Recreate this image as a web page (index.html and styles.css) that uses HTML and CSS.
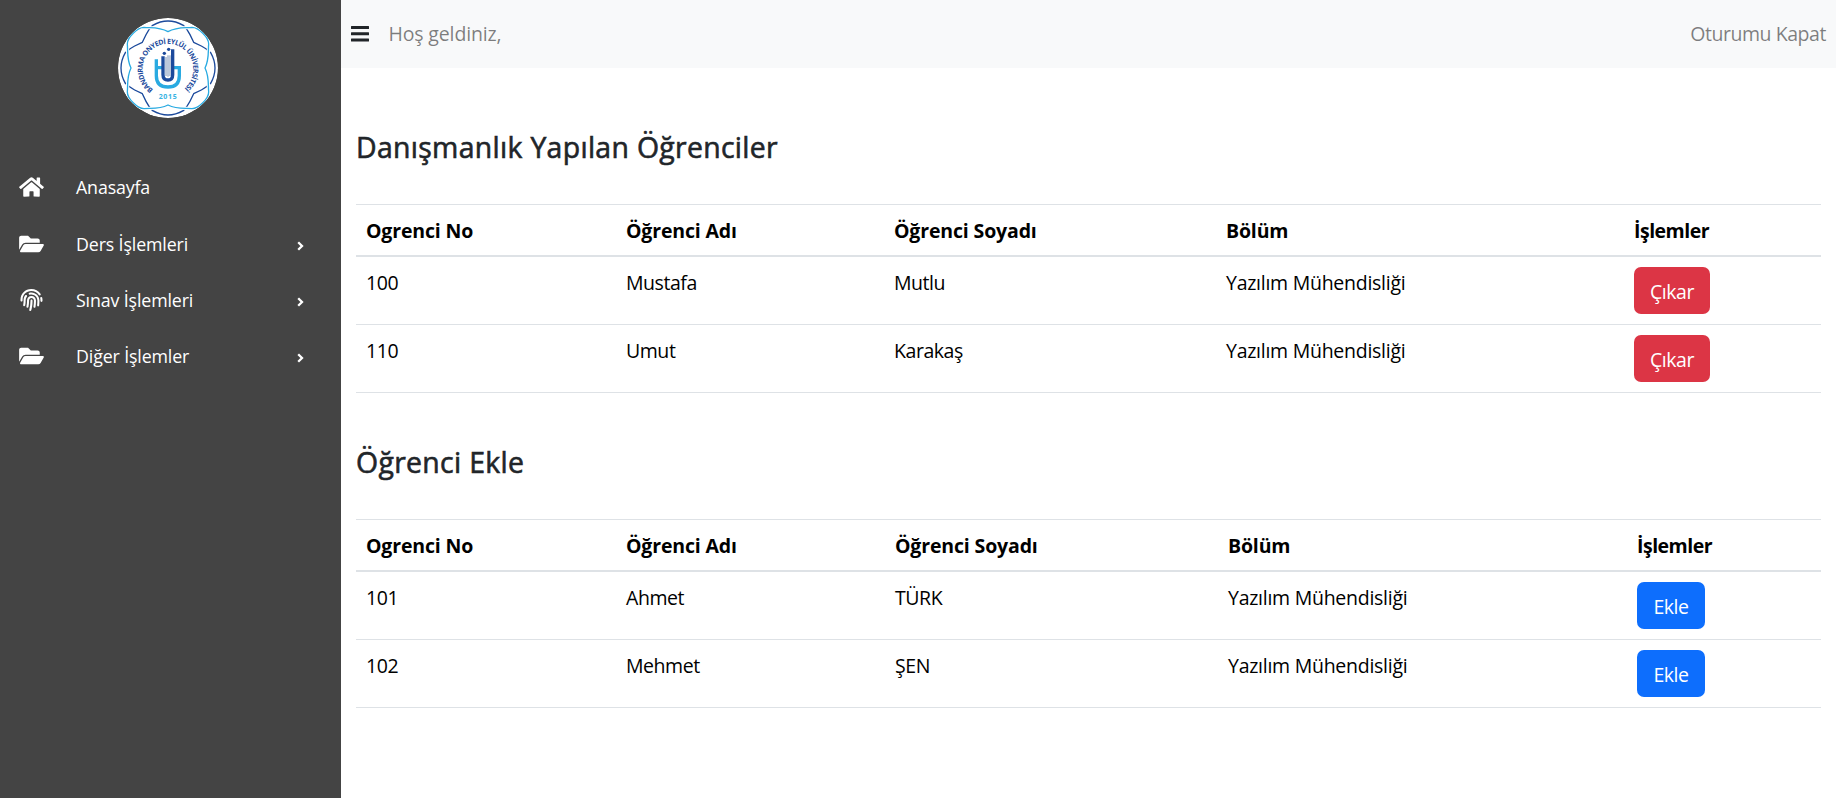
FILE: index.html
```html
<!DOCTYPE html>
<html lang="tr">
<head>
<meta charset="utf-8">
<title>Danışmanlık</title>
<link rel="stylesheet" href="styles.css">
</head>
<body>
<svg class="defs" aria-hidden="true">
  <symbol id="folder" viewBox="0 0 576 512"><path d="M572.694 292.093L500.27 416.248A63.997 63.997 0 0 1 444.989 448H45.025c-18.523 0-30.064-20.093-20.731-36.093l72.424-124.155A64 64 0 0 1 152 256h399.964c18.523 0 30.064 20.093 20.73 36.093zM152 224h328v-48c0-26.51-21.49-48-48-48H272l-64-64H48C21.49 64 0 85.49 0 112v278.046l69.077-118.418C86.214 242.25 117.989 224 152 224z"/></symbol>
  <symbol id="chevron" viewBox="0 0 7 10"><path d="M1.2 1.2L5 5 1.2 8.8" fill="none" stroke="currentColor" stroke-width="2.3"/></symbol>
</svg>
<div class="layout">
  <aside class="sidebar">
    <svg class="logo" viewBox="0 0 300 300">
      <circle cx="150" cy="150" r="150" fill="#fff"/>
      <g fill="none" stroke-width="4" stroke-linejoin="round">
        <path stroke="#1c4a9c" d="M73 73L84 50Q92 34 104 22Q150-4 196 22Q208 34 216 50L227 73L250 84Q266 92 278 104Q304 150 278 196Q266 208 250 216L227 227L216 250Q208 266 196 278Q150 304 104 278Q92 266 84 250L73 227L50 216Q34 208 22 196Q-4 150 22 104Q34 92 50 84Z"/>
        <path stroke="#fff" stroke-width="10" d="M150 41C124 26 100 30 78 28C58 28 28 58 28 78C30 100 26 124 39 150C26 176 30 200 28 222C28 242 58 272 78 272C100 270 124 274 150 261C176 274 200 270 222 272C242 272 272 242 272 222C270 200 274 176 261 150C274 124 270 100 272 78C272 58 242 28 222 28C200 30 176 26 150 41Z"/>
        <path stroke="#29aae1" d="M150 41C124 26 100 30 78 28C58 28 28 58 28 78C30 100 26 124 39 150C26 176 30 200 28 222C28 242 58 272 78 272C100 270 124 274 150 261C176 274 200 270 222 272C242 272 272 242 272 222C270 200 274 176 261 150C274 124 270 100 272 78C272 58 242 28 222 28C200 30 176 26 150 41Z"/>
      </g>
      <path id="ring" d="M105.500 215A76 76 0 1 1 194.500 215" fill="none"/>
      <text class="logo-name" textLength="376"><textPath href="#ring" textLength="376">BANDIRMA ONYEDİ EYLÜL ÜNİVERSİTESİ</textPath></text>
      <g fill="none">
        <path stroke="#29aae1" stroke-width="10" d="M115 124V173Q115 207 150 207Q184 207 184 173V149H168M115 149H132"/>
        <path stroke="#1c4a9c" stroke-width="10" d="M135 115V170Q135 186 150 186Q164 186 164 170V94"/>
        <path stroke="#7890b5" stroke-width="3" d="M144 117V174M150 112V176M156 112V174"/>
      </g>
      <circle cx="139" cy="106" r="5" fill="#1c4a9c"/>
      <circle cx="152" cy="94" r="5" fill="#1c4a9c"/>
      <text class="logo-year" x="122" y="242" textLength="54">2015</text>
    </svg>
    <nav class="menu">
      <a class="item item-home"><svg class="icon" viewBox="0 0 576 512"><path d="M280.37 148.26L96 300.11V464a16 16 0 0 0 16 16l112.06-.29a16 16 0 0 0 15.92-16V368a16 16 0 0 1 16-16h64a16 16 0 0 1 16 16v95.64a16 16 0 0 0 16 16.05L464 480a16 16 0 0 0 16-16V300L295.67 148.26a12.19 12.19 0 0 0-15.3 0zM571.6 251.47L488 182.56V44.05a12 12 0 0 0-12-12h-56a12 12 0 0 0-12 12v72.61L318.47 43a48 48 0 0 0-61 0L4.34 251.47a12 12 0 0 0-1.6 16.9l25.5 31A12 12 0 0 0 45.15 301l235.22-193.74a12.19 12.19 0 0 1 15.3 0L530.9 301a12 12 0 0 0 16.9-1.6l25.5-31a12 12 0 0 0-1.7-16.93z"/></svg><span class="label">Anasayfa</span></a>
      <a class="item"><svg class="icon"><use href="#folder"/></svg><span class="label">Ders İşlemleri</span><svg class="chevron"><use href="#chevron"/></svg></a>
      <a class="item"><svg class="icon" viewBox="0 0 512 512"><path d="M256.12 245.96c-13.25 0-24 10.74-24 24 1.14 72.25-8.14 141.9-27.7 211.55-2.73 9.72 2.15 30.49 23.12 30.49 10.48 0 20.11-6.92 23.09-17.52 13.53-47.91 31.04-125.41 29.48-224.52.01-13.25-10.73-24-23.99-24zm-.86-81.73C194 164.16 151.25 211.3 152.1 265.32c.75 47.94-3.75 95.91-13.37 142.55-2.69 12.98 5.67 25.69 18.64 28.36 13.05 2.67 25.67-5.66 28.36-18.64 10.34-50.09 15.17-101.58 14.37-153.02-.41-25.95 19.92-52.49 54.45-52.34 31.31.47 57.15 25.34 57.62 55.47.77 48.05-2.81 96.33-10.61 143.55-2.17 13.06 6.69 25.42 19.76 27.58 19.97 3.33 26.81-15.1 27.58-19.77 8.28-50.03 12.06-101.21 11.27-152.11-.88-55.8-47.94-101.88-104.91-102.72zm-110.69-19.78c-10.3-8.34-25.37-6.8-33.76 3.48-25.62 31.5-39.39 71.28-38.75 112 .59 37.58-2.47 75.27-9.11 112.05-2.34 13.05 6.31 25.53 19.36 27.89 20.11 3.5 27.07-14.81 27.89-19.36 7.19-39.84 10.5-80.66 9.86-121.33-.47-29.88 9.2-57.88 28-80.97 8.35-10.28 6.79-25.39-3.49-33.76zm109.47-62.33c-15.41-.41-30.87 1.44-45.78 4.97-12.89 3.06-20.87 15.98-17.83 28.89 3.06 12.89 16 20.83 28.89 17.83 11.05-2.61 22.47-3.77 34-3.69 75.43 1.13 137.73 61.5 138.88 134.58.59 37.88-1.28 76.11-5.58 113.63-1.5 13.17 7.95 25.08 21.11 26.58 16.72 1.95 25.51-11.88 26.58-21.11a929.06 929.06 0 0 0 5.89-119.85c-1.56-98.75-85.07-180.33-186.16-181.83zm252.07 121.45c-2.86-12.92-15.51-21.2-28.61-18.27-12.94 2.86-21.12 15.66-18.26 28.61 4.71 21.41 4.91 37.41 4.7 61.6-.11 13.27 10.55 24.09 23.8 24.2h.2c13.17 0 23.89-10.61 24-23.8.18-22.18.4-44.11-5.83-72.34zm-40.12-90.72C417.29 43.46 337.6 1.29 252.81.02 183.02-.82 118.47 24.91 70.46 72.94 24.09 119.37-.9 181.04.14 246.65l-.12 21.47c-.39 13.25 10.03 24.31 23.28 24.69.23.02.48.02.72.02 12.92 0 23.59-10.3 23.97-23.3l.16-23.64c-.83-52.5 19.16-101.86 56.28-139 38.76-38.8 91.34-59.67 147.68-58.86 69.45 1.03 134.73 35.56 174.62 92.39 7.61 10.86 22.56 13.45 33.42 5.86 10.84-7.62 13.46-22.59 5.84-33.43z"/></svg><span class="label">Sınav İşlemleri</span><svg class="chevron"><use href="#chevron"/></svg></a>
      <a class="item"><svg class="icon"><use href="#folder"/></svg><span class="label">Diğer İşlemler</span><svg class="chevron"><use href="#chevron"/></svg></a>
    </nav>
  </aside>
  <div class="page">
    <header class="navbar">
      <svg class="bars" viewBox="0 0 18 16"><path d="M.5 0h17q.5 0 .5.5v2q0 .5-.5.5H.5Q0 3 0 2.500v-2Q0 0 .5 0zm0 6.300h17q.5 0 .5.5v2q0 .5-.5.5H.5Q0 9.300 0 8.800v-2Q0 6.300.5 6.300zm0 6.200h17q.5 0 .5.5v2q0 .5-.5.5H.5Q0 15.500 0 15v-2Q0 12.500.5 12.500z"/></svg>
      <span class="welcome">Hoş geldiniz,</span>
      <a class="logout">Oturumu Kapat</a>
    </header>
    <main class="content">
      <h3 class="title">Danışmanlık Yapılan Öğrenciler</h3>
      <table class="table">
        <colgroup><col class="c-no"><col class="c-name"><col class="c-surname"><col class="c-dept"><col></colgroup>
        <thead><tr><th>Ogrenci No</th><th>Öğrenci Adı</th><th>Öğrenci Soyadı</th><th>Bölüm</th><th class="ops">İşlemler</th></tr></thead>
        <tbody>
          <tr><td>100</td><td>Mustafa</td><td>Mutlu</td><td class="dept">Yazılım Mühendisliği</td><td class="action"><button class="btn btn-danger">Çıkar</button></td></tr>
          <tr><td>110</td><td>Umut</td><td>Karakaş</td><td class="dept">Yazılım Mühendisliği</td><td class="action"><button class="btn btn-danger">Çıkar</button></td></tr>
        </tbody>
      </table>
      <h3 class="title title-add">Öğrenci Ekle</h3>
      <table class="table table-add">
        <colgroup><col class="c-no"><col class="c-name"><col class="c-surname"><col class="c-dept"><col></colgroup>
        <thead><tr><th>Ogrenci No</th><th>Öğrenci Adı</th><th>Öğrenci Soyadı</th><th>Bölüm</th><th class="ops">İşlemler</th></tr></thead>
        <tbody>
          <tr><td>101</td><td>Ahmet</td><td>TÜRK</td><td class="dept">Yazılım Mühendisliği</td><td class="action"><button class="btn btn-primary">Ekle</button></td></tr>
          <tr><td>102</td><td>Mehmet</td><td>ŞEN</td><td class="dept">Yazılım Mühendisliği</td><td class="action"><button class="btn btn-primary">Ekle</button></td></tr>
        </tbody>
      </table>
    </main>
  </div>
</div>
</body>
</html>
```
FILE: styles.css
```css
* { box-sizing: border-box; }
body {
  margin: 0;
  font-family: "Segoe UI", "Open Sans", "Noto Sans", sans-serif;
  font-size: 19.5px;
  line-height: 30px;
  letter-spacing: -0.45px;
  color: #212529;
  background: #fff;
}
.defs { display: none; }
.layout { display: flex; min-height: 798px; }
.sidebar { width: 341px; flex: none; background: #444; color: #fff; }
.logo { display: block; width: 100px; height: 100px; margin: 18px 0 0 118px; border-radius: 50%; }
.logo-name { font: bold 21px "Open Sans", sans-serif; fill: #1c4a9c; letter-spacing: 0; }
.logo-year { font: bold 21px "Open Sans", sans-serif; fill: #38b3e3; letter-spacing: 0; }
.menu { padding-top: 41px; }
.item { display: flex; align-items: center; height: 56px; padding: 1px 37px 0 19px; font-size: 17.8px; letter-spacing: -0.13px; }
.item-home { padding-top: 0; }
.icon { width: 25px; height: 22px; fill: #fff; flex: none; }
.label { margin-left: 32px; flex: 1; }
.chevron { width: 7px; height: 10px; margin-top: 4px; color: #fff; }
.page { flex: 1; min-width: 0; }
.navbar { display: flex; align-items: center; height: 68px; padding: 0 10px; background: #f8f9fa; color: rgba(0, 0, 0, 0.5); }
.bars { width: 18px; height: 16px; fill: #212529; }
.welcome { margin-left: 19.5px; letter-spacing: -0.15px; }
.logout { margin-left: auto; letter-spacing: -0.45px; }
.content { padding: 61px 15px 0; }
.title { margin: 0 0 39px; font-size: 28.4px; font-weight: 400; line-height: 36px; letter-spacing: 0.32px; -webkit-text-stroke: 0.6px #212529; }
.title-add { margin-top: 51px; }
.table { width: 1465px; table-layout: fixed; border-collapse: separate; border-spacing: 0; color: #000; }
.table th { height: 53px; padding: 11px 10px 9px; text-align: left; vertical-align: top; font-weight: 700; letter-spacing: -0.15px; border-top: 1px solid #dee2e6; border-bottom: 2px solid #dee2e6; }
.table .ops { letter-spacing: -0.5px; }
.table td { height: 68px; padding: 11px 10px 9px; vertical-align: top; border-bottom: 1px solid #dee2e6; }
.table .dept { letter-spacing: -0.26px; }
.table .action { padding: 10px; }
.c-no { width: 260px; }
.c-name { width: 268px; }
.c-surname { width: 332px; }
.c-dept { width: 408px; }
.table-add .c-name { width: 269px; }
.table-add .c-surname { width: 333px; }
.table-add .c-dept { width: 409px; }
.btn { display: block; height: 47px; padding: 3px 0 0; border: 0; border-radius: 7px; color: #fff; font: inherit; letter-spacing: inherit; text-align: center; }
.btn-danger { width: 76px; background: #dc3545; }
.btn-primary { width: 68px; background: #0d6efd; }
```
